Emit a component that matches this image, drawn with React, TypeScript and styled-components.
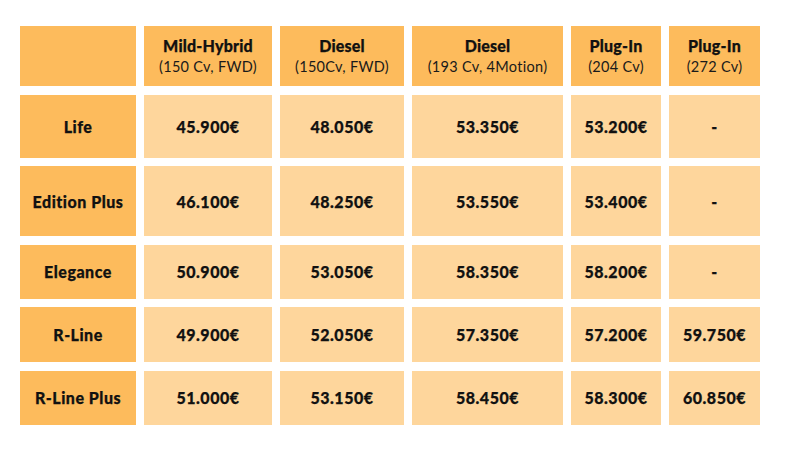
import * as React from "react";
import styled, { createGlobalStyle } from "styled-components";

const GlobalStyle = createGlobalStyle`
  html, body {
    margin: 0;
    padding: 0;
    background: #ffffff;
  }
  body {
    font-family: Lato, "Liberation Sans", sans-serif;
    color: #111111;
  }
`;

const Page = styled.div`
  width: 800px;
  height: 450px;
  padding: 26px 0 0 20px;
  box-sizing: border-box;
`;

const Table = styled.div`
  display: grid;
  grid-template-columns: 116px 128px 124px 151px 90px 91px;
  grid-template-rows: 60px 63px 70px 54px 55px 54px;
  column-gap: 8px;
  row-gap: 8.6px;
`;

const Cell = styled.div<{ $tone: "dark" | "light" }>`
  background: ${(p) => (p.$tone === "dark" ? "#fdbb5c" : "#fed69c")};
  display: flex;
  flex-direction: column;
  align-items: center;
  justify-content: center;
  text-align: center;
  font-weight: 900;
  font-size: 16px;
  letter-spacing: 0.5px;
  -webkit-text-stroke: 0.25px #111111;
`;

const Title = styled.div`
  font-weight: 900;
  font-size: 16px;
  line-height: 20px;
  letter-spacing: 0.2px;
`;

const Sub = styled.div`
  font-weight: 400;
  font-size: 14.5px;
  line-height: 21px;
  letter-spacing: 0.3px;
  color: #1a1a1a;
  -webkit-text-stroke: 0;
`;

const columns = [
  { title: "Mild-Hybrid", sub: "(150 Cv, FWD)" },
  { title: "Diesel", sub: "(150Cv, FWD)" },
  { title: "Diesel", sub: "(193 Cv, 4Motion)" },
  { title: "Plug-In", sub: "(204 Cv)" },
  { title: "Plug-In", sub: "(272 Cv)" },
];

const rows = [
  { name: "Life", prices: ["45.900€", "48.050€", "53.350€", "53.200€", "-"] },
  { name: "Edition Plus", prices: ["46.100€", "48.250€", "53.550€", "53.400€", "-"] },
  { name: "Elegance", prices: ["50.900€", "53.050€", "58.350€", "58.200€", "-"] },
  { name: "R-Line", prices: ["49.900€", "52.050€", "57.350€", "57.200€", "59.750€"] },
  { name: "R-Line Plus", prices: ["51.000€", "53.150€", "58.450€", "58.300€", "60.850€"] },
];

export default function App() {
  return (
    <>
      <GlobalStyle />
      <Page>
        <Table>
          <Cell $tone="dark" />
          {columns.map((c, i) => (
            <Cell key={i} $tone="dark">
              <Title>{c.title}</Title>
              <Sub>{c.sub}</Sub>
            </Cell>
          ))}
          {rows.map((r) => (
            <React.Fragment key={r.name}>
              <Cell $tone="dark">{r.name}</Cell>
              {r.prices.map((p, i) => (
                <Cell key={i} $tone="light">
                  {p}
                </Cell>
              ))}
            </React.Fragment>
          ))}
        </Table>
      </Page>
    </>
  );
}
